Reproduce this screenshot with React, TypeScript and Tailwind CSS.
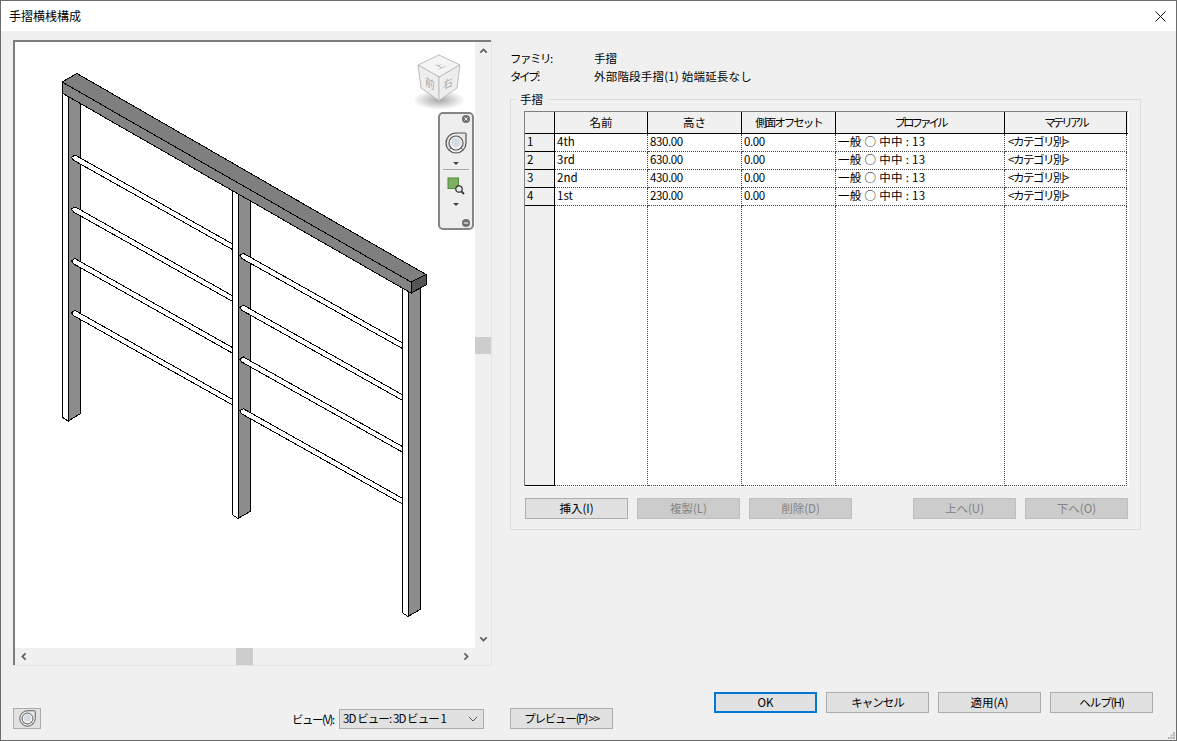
const columns = "grid grid-cols-[30px_93px_94px_94px_169px_122px]"

const rows = [
  { id: "1", name: "4th", height: "830.00" },
  { id: "2", name: "3rd", height: "630.00" },
  { id: "3", name: "2nd", height: "430.00" },
  { id: "4", name: "1st", height: "230.00" },
]

const railOffsets = [0, 51.8, 103.6, 155.4]

function rail(sx: number, sy: number, ex: number, ey: number) {
  return `${sx},${sy} ${ex},${ey} ${ex},${ey + 5.6} ${sx - 1.5},${sy + 5.2} ${sx - 3.5},${sy + 2.2}`
}

function Chevron({ d, className }: { d: string; className: string }) {
  return (
    <svg viewBox="0 0 10 10" className={className}>
      <path d={d} fill="none" stroke="#5f5f5f" strokeWidth="2.2" />
    </svg>
  )
}

function WheelIcon({ className }: { className: string }) {
  return (
    <svg viewBox="0 0 22 22" className={className}>
      <path d="M11 1 H20 A1 1 0 0 1 21 2 V11 A10 10 0 1 1 11 1 Z" fill="#e8e8e8" stroke="#555" strokeWidth="1.2" />
      <circle cx="11" cy="11" r="7" fill="#f4f4f4" stroke="#555" strokeWidth="1.2" />
      <circle cx="11" cy="10.5" r="4.8" fill="#d5dbe3" />
      <path d="M4 18 L6.500 15.500 M18 18 L15.500 15.500" stroke="#777" strokeWidth="1" />
    </svg>
  )
}

function Arrow() {
  return <div className="h-0 w-0 border-x-[3px] border-t-[3px] border-x-transparent border-t-[#444]" />
}

function RailingDrawing() {
  return (
    <svg viewBox="15 42 460 606" className="absolute inset-0 h-[606px] w-[460px]">
      <defs>
        <radialGradient id="cubeShadow">
          <stop offset="0%" stopColor="#8a8a8a" stopOpacity="0.75" />
          <stop offset="100%" stopColor="#8a8a8a" stopOpacity="0" />
        </radialGradient>
      </defs>
      <g shapeRendering="crispEdges" stroke="#000" strokeWidth="1">
        {[
          [62, 421, 89],
          [232, 518.5, 186],
          [402, 616.5, 284],
        ].map(([x, tip, top]) => (
          <g key={x}>
            <polygon points={`${x},${top} ${x + 6},${top} ${x + 6},${tip} ${x},${tip - 4}`} fill="#fff" />
            <polygon points={`${x + 6},${top} ${x + 18},${top} ${x + 18},${tip - 7} ${x + 6},${tip}`} fill="#8c8c8c" />
          </g>
        ))}
        {railOffsets.map((o) => (
          <g key={o}>
            <polygon points={rail(75, 155 + o, 232, 243.7 + o)} fill="#fff" />
            <polygon points={rail(243.3, 253.3 + o, 402, 342.7 + o)} fill="#fff" />
          </g>
        ))}
        <polygon points="62,82 77,73.5 426,274.5 411,282" fill="#7f7f7f" />
        <polygon points="62,82 411,282 411,293 62,93" fill="#848484" />
        <polygon points="411,282 426,274.5 426,285 411,293" fill="#555" />
      </g>

      <ellipse cx="439" cy="100" rx="26" ry="10" fill="url(#cubeShadow)" />
      <g stroke="#bdbdbd" strokeWidth="1" strokeLinejoin="round">
        <polygon points="439,55 460,65 439,77 418,65" fill="#f4f4f4" />
        <polygon points="418,65 439,77 439,100.5 421,88" fill="#eeeeee" />
        <polygon points="439,77 460,65 457,88 439,100.5" fill="#eeeeee" />
      </g>
      <g fill="#a8a8a8" fontSize="11" className="[font-family:'Noto_Sans_CJK_JP',sans-serif]">
        <text transform="matrix(0.7 -0.35 0.7 0.35 438.300 69.500)">上</text>
        <text transform="matrix(0.9 0.45 0 1 425 85)">前</text>
        <text transform="matrix(0.9 -0.45 0 1 443 90)">右</text>
      </g>
    </svg>
  )
}

function NavBar() {
  return (
    <div className="absolute left-[423px] top-[70px] flex h-[118px] w-[36px] flex-col items-center rounded-[5px] border-2 border-[#858585] bg-[#eeeeee]">
      <div className="flex w-full justify-end pr-[2px] pt-[1px]">
        <svg viewBox="0 0 8 8" className="h-2 w-2">
          <circle cx="4" cy="4" r="4" fill="#6f6f6f" />
          <path d="M2.4 2.4 L5.6 5.6 M5.6 2.4 L2.4 5.6" stroke="#eee" strokeWidth="1" />
        </svg>
      </div>
      <WheelIcon className="mt-[9px] h-[22px] w-[22px]" />
      <div className="mt-[8px]">
        <Arrow />
      </div>
      <div className="mt-[4px] h-px w-[26px] bg-[#a8a8a8]" />
      <svg viewBox="0 0 18 18" className="mt-[7px] h-[18px] w-[18px]">
        <rect x="1" y="1" width="10.5" height="10.5" fill="#7fae65" stroke="#4f8a38" />
        <circle cx="12" cy="12" r="3.2" fill="#e4ecf2" stroke="#333" strokeWidth="1.2" />
        <path d="M14.4 14.4 L17 17" stroke="#333" strokeWidth="1.8" />
      </svg>
      <div className="mt-[8px]">
        <Arrow />
      </div>
      <div className="mt-auto flex w-full justify-end pb-[1px] pr-[2px]">
        <svg viewBox="0 0 8 8" className="h-2 w-2">
          <circle cx="4" cy="4" r="4" fill="#6f6f6f" />
          <path d="M1.8 4 H6.2" stroke="#eee" strokeWidth="1.2" />
        </svg>
      </div>
    </div>
  )
}

function PreviewPanel() {
  return (
    <div className="h-[626px] w-[479px] border-r border-b border-[#e4e4e4]">
      <div className="flex h-full flex-col border-t-2 border-l-2 border-[#7d7d7d]">
        <div className="flex h-[606px]">
          <div className="relative w-[460px] overflow-hidden bg-white">
            <RailingDrawing />
            <NavBar />
          </div>
          <div className="flex w-[16px] flex-col items-center">
            <Chevron d="M1 7 L5 3 L9 7" className="mt-[5px] h-[8px] w-[9px]" />
            <div className="mt-[282px] h-[17px] w-[16px] bg-[#cdcdcd]" />
            <Chevron d="M1 3 L5 7 L9 3" className="mt-[281px] h-[8px] w-[9px]" />
          </div>
        </div>
        <div className="flex h-[17px] w-[460px] items-center pl-[5px] pr-[5px]">
          <Chevron d="M7 1 L3 5 L7 9" className="h-[9px] w-[8px]" />
          <div className="ml-[208px] h-[17px] w-[17px] bg-[#cdcdcd]" />
          <Chevron d="M3 1 L7 5 L3 9" className="ml-auto h-[9px] w-[8px]" />
        </div>
      </div>
    </div>
  )
}

function Button({ label, disabled, primary, tight }: { label: string; disabled?: boolean; primary?: boolean; tight?: boolean }) {
  const tone = disabled
    ? "border border-[#bfbfbf] bg-[#cccccc] text-[#838383]"
    : primary
      ? "border-2 border-[#0078d7] bg-[#e1e1e1] text-black"
      : "border border-[#adadad] bg-[#e1e1e1] text-black"
  return (
    <div className={`flex h-[21px] w-[103px] shrink-0 items-center justify-center ${tone} ${tight ? "tracking-[-1px]" : ""}`}>
      {label}
    </div>
  )
}

function RailTable() {
  return (
    <div className="ml-[13px] mt-[11px] flex h-[376px] w-[605px] flex-col border-r border-b border-white">
      <div className="flex h-full flex-col border-t border-l border-[#808080]">
        <div className={`${columns} h-[22px] border-b border-black bg-[#f0f0f0] text-center`}>
          <div className="border-r border-black" />
          <div className="border-r border-black leading-[21px]">名前</div>
          <div className="border-r border-black leading-[21px]">高さ</div>
          <div className="border-r border-black leading-[21px] tracking-[-2px]">側面オフセット</div>
          <div className="border-r border-black leading-[21px] tracking-[-3px]">プロファイル</div>
          <div className="border-r border-black leading-[21px] tracking-[-3px]">マテリアル</div>
        </div>
        {rows.map((row) => (
          <div key={row.id} className={`${columns} h-[18px] bg-white leading-[15px]`}>
            <div className="border-r border-b border-black bg-[#f0f0f0] pl-[2px]">{row.id}</div>
            <div className="border-r border-b border-dotted border-[#444] pl-[2px]">{row.name}</div>
            <div className="border-r border-b border-dotted border-[#444] pl-[2px] tracking-[-0.4px]">{row.height}</div>
            <div className="border-r border-b border-dotted border-[#444] pl-[2px] tracking-[-0.4px]">0.00</div>
            <div className="border-r border-b border-dotted border-[#444] pl-[2px] tracking-[0.3px]">一般 ○ 中中 : 13</div>
            <div className="border-r border-b border-dotted border-[#444] pl-[3px] tracking-[-1.5px]">&lt;カテゴリ別&gt;</div>
          </div>
        ))}
        <div className={`${columns} flex-1 bg-white`}>
          <div className="border-r border-b border-black bg-[#f0f0f0]" />
          <div className="border-r border-b border-dotted border-[#444]" />
          <div className="border-r border-b border-dotted border-[#444]" />
          <div className="border-r border-b border-dotted border-[#444]" />
          <div className="border-r border-b border-dotted border-[#444]" />
          <div className="border-r border-b border-dotted border-[#444]" />
        </div>
      </div>
    </div>
  )
}

export default function App() {
  return (
    <div className="relative flex h-[741px] w-[1177px] flex-col overflow-hidden border border-[#6b6b6b] bg-[#f0f0f0] text-[11.5px] text-black [font-family:'Noto_Sans_CJK_JP',sans-serif]">
      <div className="flex h-[30px] items-center justify-between bg-white pl-[8px] pr-[10px]">
        <span className="text-[12px]">手摺横桟構成</span>
        <svg viewBox="0 0 11 11" className="h-[11px] w-[11px]">
          <path d="M0.5 0.5 L10.5 10.5 M10.5 0.5 L0.5 10.5" stroke="#111" strokeWidth="1" />
        </svg>
      </div>

      <div className="flex flex-1 pl-[12px] pt-[9px]">
        <div className="flex w-[479px] flex-col">
          <PreviewPanel />
          <div className="mt-[42px] flex items-end">
            <div className="flex h-[21px] w-[28px] items-center justify-center border border-[#adadad] bg-[#e1e1e1]">
              <WheelIcon className="h-[17px] w-[17px]" />
            </div>
            <span className="ml-[251px] w-[47px] leading-[19px] tracking-[-1.5px]">ビュー(V):</span>
            <div className="flex h-[20px] w-[145px] items-center justify-between border border-[#adadad] bg-[#e1e1e1] pl-[3px] pr-[5px]">
              <span className="tracking-[-0.9px]">3D ビュー: 3D ビュー 1</span>
              <svg viewBox="0 0 10 6" className="h-[6px] w-[10px]">
                <path d="M1 1 L5 5 L9 1" fill="none" stroke="#555" strokeWidth="1" />
              </svg>
            </div>
          </div>
        </div>

        <div className="ml-[18px] flex flex-1 flex-col pb-[11px] pr-[23px] pt-[10px]">
          <div className="flex h-[18px] items-center">
            <span className="w-[84px] tracking-[-1.5px]">ファミリ:</span>
            <span>手摺</span>
          </div>
          <div className="flex h-[18px] items-center">
            <span className="w-[84px] tracking-[-2.5px]">タイプ:</span>
            <span className="tracking-[0.2px]">外部階段手摺(1) 始端延長なし</span>
          </div>

          <div className="relative mt-[13px] h-[431px] w-[631px] border border-[#dcdcdc]">
            <span className="absolute -top-[9px] left-[4px] bg-[#f0f0f0] px-[5px] leading-[16px]">手摺</span>
            <RailTable />
            <div className="ml-[14px] mt-[11px] flex w-[603px] gap-[9px]">
              <Button label="挿入(I)" />
              <Button label="複製(L)" disabled />
              <Button label="削除(D)" disabled />
              <div className="w-[43px]" />
              <Button label="上へ(U)" disabled />
              <Button label="下へ(O)" disabled />
            </div>
          </div>

          <div className="mt-auto flex items-start">
            <div className="mt-[16px] flex h-[21px] w-[103px] items-center justify-center border border-[#adadad] bg-[#e1e1e1] tracking-[-1.2px]">
              プレビュー(P) &gt;&gt;
            </div>
            <div className="ml-auto flex gap-[9px]">
              <Button label="OK" primary />
              <Button label="キャンセル" tight />
              <Button label="適用(A)" />
              <Button label="ヘルプ(H)" tight />
            </div>
          </div>
        </div>
      </div>

      <svg viewBox="0 0 7 7" className="absolute bottom-[1px] right-[1px] h-[7px] w-[7px]">
        <path d="M5 0h2v2h-2z M2.500 2.500h2v2h-2z M5 2.500h2v2h-2z M0 5h2v2h-2z M2.500 5h2v2h-2z M5 5h2v2h-2z" fill="#b5b5b5" />
      </svg>
    </div>
  )
}
